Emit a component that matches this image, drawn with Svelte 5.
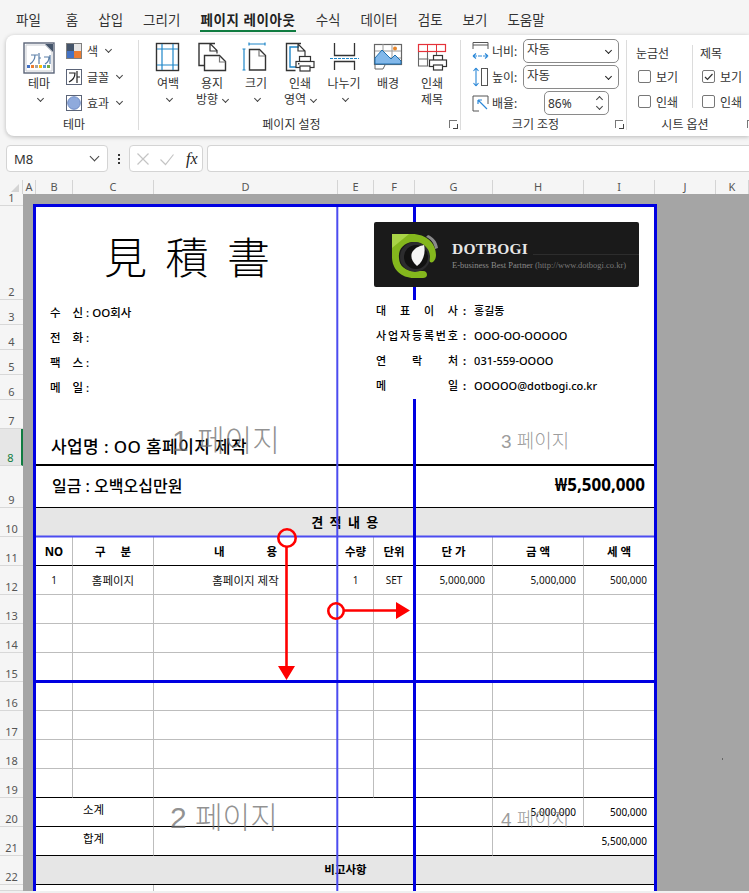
<script>
	const tabs = ['파일', '홈', '삽입', '그리기', '페이지 레이아웃', '수식', '데이터', '검토', '보기', '도움말'];
	const colHeads = ['A', 'B', 'C', 'D', 'E', 'F', 'G', 'H', 'I', 'J', 'K'];

	// left block + right block of the quote header
	const customer = ['수    신 : OO회사', '전    화 :', '팩    스 :', '메    일 :'];
	const company = [
		['대표이사', '홍길동'],
		['사업자등록번호', 'OOO-OO-OOOOO'],
		['연락처', '031-559-OOOO'],
		['메일', 'OOOOO@dotbogi.co.kr']
	];
	const heads = ['NO', '구     분', '내              용', '수량', '단위', '단 가', '금 액', '세 액'];
	const first = ['1', '홈페이지', '홈페이지 제작', '1', 'SET', '5,000,000', '5,000,000', '500,000'];
	const emptyRows = [13, 14, 15, 16, 17, 18, 19];
</script>

<div class="app">
	<nav class="tabs">
		{#each tabs as t, i}
			<span class="tab" class:active={i === 4}>{t}</span>
		{/each}
	</nav>

	<section class="ribbon">
		<div class="group theme">
			<div class="body">
				<div class="big theme-btn">
					<svg width="32" height="32" viewBox="0 0 32 32">
						<rect x="1" y="1" width="30" height="30" fill="#fff" stroke="#5b6478" stroke-width="1.4" />
						<path d="M3 3h19l7 7v19H3z" fill="#fff" stroke="#c9ccd2" />
						<path d="M22 2h8v8z" fill="#44546a" />
						<path d="M8 13h7M12 13c0 5-2 7-5 9M16 11v11M16 16h2M21 15h5c0 4-2 6-4 7M27 13v9" fill="none" stroke="#5a7fa8" stroke-width="1.2" />
						<rect x="4" y="23" width="3" height="3" fill="#4472c4" />
						<rect x="8" y="23" width="3" height="3" fill="#ed7d31" />
						<rect x="12" y="23" width="3" height="3" fill="#a5a5a5" />
						<rect x="16" y="23" width="3" height="3" fill="#ffc000" />
						<rect x="20" y="23" width="3" height="3" fill="#5b9bd5" />
						<rect x="24" y="23" width="3" height="3" fill="#70ad47" />
					</svg>
					<span class="lbl">테마</span>
					<i class="chev"></i>
				</div>
				<div class="small-col">
					<div class="small">
						<svg width="16" height="16" viewBox="0 0 16 16">
							<rect width="16" height="16" fill="#7f7f7f" />
							<rect x="1" y="1" width="7" height="7" fill="#44546a" />
							<rect x="8" y="1" width="7" height="7" fill="#e7e6e6" />
							<rect x="1" y="8" width="7" height="7" fill="#4472c4" />
							<rect x="8" y="8" width="7" height="7" fill="#ed7d31" />
						</svg>
						<span>색</span><i class="chev"></i>
					</div>
					<div class="small">
						<svg width="16" height="16" viewBox="0 0 16 16">
							<rect x=".5" y=".5" width="15" height="15" fill="#fff" stroke="#5b6478" />
							<path d="M3 4h6c0 4-2 7-6 9M11 2v12M11 8h3" fill="none" stroke="#222" stroke-width="1.2" />
						</svg>
						<span>글꼴</span><i class="chev"></i>
					</div>
					<div class="small">
						<svg width="16" height="16" viewBox="0 0 16 16">
							<rect x=".5" y=".5" width="15" height="15" fill="#fff" stroke="#5b6478" />
							<circle cx="8" cy="8" r="6.3" fill="#8faadc" stroke="#6f8bc4" />
						</svg>
						<span>효과</span><i class="chev"></i>
					</div>
				</div>
			</div>
			<div class="group-name">테마</div>
		</div>

		<div class="group setup">
			<div class="body">
				<div class="big">
					<svg width="32" height="30" viewBox="0 0 32 30">
						<rect x="4.5" y="1.5" width="22" height="27" fill="#fff" stroke="#333" stroke-width="1.4" />
						<path d="M10 2v26M21 2v26M5 7h21M5 23h21" stroke="#1f86c8" stroke-width="1.2" fill="none" />
					</svg>
					<span class="lbl">여백</span>
					<i class="chev"></i>
				</div>
				<div class="big">
					<svg width="32" height="30" viewBox="0 0 32 30">
						<path d="M19 1.5H3v22h5" fill="none" stroke="#333" stroke-width="1.4" />
						<path d="M14 1.5l7 7v3M14 2v7h7" fill="none" stroke="#333" stroke-width="1.2" />
						<path d="M8.5 13.5h15l6 6v9h-21z" fill="#fff" stroke="#333" stroke-width="1.4" />
						<path d="M23.5 14v6h6" fill="none" stroke="#777" stroke-width="1.2" />
					</svg>
					<span class="lbl">용지</span>
					<span class="lbl">방향 <i class="chev"></i></span>
				</div>
				<div class="big">
					<svg width="32" height="30" viewBox="0 0 32 30">
						<path d="M9 2h16M9 .5v3M25 .5v3M4 7v21M2.500 7h3M2.500 28h3" fill="none" stroke="#1f86c8" stroke-width="1.2" />
						<path d="M9.500 7.500h10l6 6v14.500h-16z" fill="#fff" stroke="#333" stroke-width="1.4" />
						<path d="M19 8v6h6" fill="none" stroke="#777" stroke-width="1.2" />
					</svg>
					<span class="lbl">크기</span>
					<i class="chev"></i>
				</div>
				<div class="big">
					<svg width="32" height="30" viewBox="0 0 32 30">
						<path d="M17 1.500H2.500v27h9" fill="none" stroke="#333" stroke-width="1.4" />
						<path d="M15 5H6v20h6" fill="none" stroke="#1f86c8" stroke-width="1.4" />
						<path d="M14 2l7 7v5M14 2v7h7" fill="none" stroke="#333" stroke-width="1.2" />
						<rect x="15.500" y="14.500" width="11" height="5" fill="#fff" stroke="#333" stroke-width="1.2" />
						<rect x="12" y="19.500" width="18" height="6" fill="#fff" stroke="#333" stroke-width="1.2" />
						<rect x="16" y="24" width="10" height="5" fill="#fff" stroke="#333" stroke-width="1.2" />
						<rect x="14" y="21" width="1.500" height="1.500" fill="#333" />
					</svg>
					<span class="lbl">인쇄</span>
					<span class="lbl">영역 <i class="chev"></i></span>
				</div>
				<div class="big">
					<svg width="32" height="30" viewBox="0 0 32 30">
						<path d="M6.500 1v12.500h20V1M6.500 28V19.500h20V28" fill="none" stroke="#333" stroke-width="1.3" />
						<path d="M2 16.500h29" stroke="#1f86c8" stroke-width="1.2" stroke-dasharray="3 1" />
					</svg>
					<span class="lbl">나누기</span>
					<i class="chev"></i>
				</div>
				<div class="big">
					<svg width="32" height="30" viewBox="0 0 32 30">
						<rect x="2.500" y="2.500" width="27" height="20" fill="#fff" stroke="#666" stroke-width="1.200" />
						<path d="M11 2v15M20 2v15M3 9h26M3 16h26" stroke="#999" fill="none" />
						<path d="M3 22v-6l7-8 9 9 4-4 6 6v3z" fill="#82b8ea" stroke="#1f6fae" stroke-width="1" />
						<circle cx="23" cy="6.500" r="2" fill="#e8862a" />
						<path d="M3 23v4h8l2-4" fill="#fff" stroke="#666" />
					</svg>
					<span class="lbl">배경</span>
				</div>
				<div class="big">
					<svg width="32" height="30" viewBox="0 0 32 30">
						<rect x="2.500" y="2.500" width="27" height="7" fill="#fff" stroke="#e5323a" stroke-width="1.200" />
						<path d="M11.500 3v6M20.500 3v6" stroke="#e5323a" fill="none" />
						<path d="M2.500 10v14h10M2.500 17h10M11.500 10v14M20.500 10v3" fill="none" stroke="#666" stroke-width="1.100" />
						<rect x="17.500" y="13.500" width="9" height="5" fill="#fff" stroke="#333" stroke-width="1.200" />
						<rect x="13.500" y="18" width="17" height="6.500" fill="#fff" stroke="#333" stroke-width="1.200" />
						<rect x="17.500" y="23" width="9" height="5" fill="#fff" stroke="#333" stroke-width="1.200" />
					</svg>
					<span class="lbl">인쇄</span>
					<span class="lbl">제목</span>
				</div>
			</div>
			<div class="group-name">페이지 설정</div>
			<span class="launcher"></span>
		</div>

		<div class="group scale">
			<div class="scale-rows">
				<div class="scale-row">
					<svg width="17" height="20" viewBox="0 0 17 20">
						<path d="M1 8V1.500h15V8M1 4h15" fill="none" stroke="#555" />
						<path d="M1 15h15M1 15l3-2.500M1 15l3 2.500M16 15l-3-2.500M16 15l-3 2.500" fill="none" stroke="#2b88d8" stroke-width="1.100" stroke-dasharray="4 1" />
					</svg>
					<span class="scale-lbl">너비:</span>
					<div class="select">자동<i class="chev"></i></div>
				</div>
				<div class="scale-row">
					<svg width="17" height="22" viewBox="0 0 17 22">
						<path d="M4 2v18M4 2L1.500 5M4 2l2.500 3M4 20l-2.500-3M4 20l2.500-3" fill="none" stroke="#2b88d8" stroke-width="1.100" />
						<rect x="9.500" y="2.500" width="6" height="17" fill="none" stroke="#555" />
					</svg>
					<span class="scale-lbl">높이:</span>
					<div class="select">자동<i class="chev"></i></div>
				</div>
				<div class="scale-row">
					<svg width="17" height="17" viewBox="0 0 17 17">
						<path d="M7 16H1V1h15v8" fill="none" stroke="#555" />
						<path d="M6 5l9 9M6 5v4M6 5h4" fill="none" stroke="#2b88d8" stroke-width="1.200" />
					</svg>
					<span class="scale-lbl">배율:</span>
					<div class="spin">
						<span>86%</span>
						<span class="arrows"><i class="chev up"></i><i class="chev"></i></span>
					</div>
				</div>
			</div>
			<div class="group-name">크기 조정</div>
			<span class="launcher"></span>
		</div>

		<div class="group options">
			<div class="opt-cols">
				<div class="opt-col">
					<div class="opt-title">눈금선</div>
					<label class="opt"><span class="box"></span>보기</label>
					<label class="opt"><span class="box"></span>인쇄</label>
				</div>
				<div class="opt-col second">
					<div class="opt-title">제목</div>
					<label class="opt">
						<span class="box">
							<svg width="11" height="11" viewBox="0 0 11 11"><path d="M2 6l2.500 2.500L9.500 3" fill="none" stroke="#333" stroke-width="1.200" /></svg>
						</span>보기
					</label>
					<label class="opt"><span class="box"></span>인쇄</label>
				</div>
			</div>
			<div class="group-name">시트 옵션</div>
			<span class="launcher cut"></span>
		</div>
	</section>

	<section class="formula">
		<div class="name-box">M8<i class="chev big-chev"></i></div>
		<div class="dots"><b></b><b></b><b></b></div>
		<div class="fx-box">
			<svg width="14" height="14" viewBox="0 0 14 14"><path d="M1.500 1.500l11 11M12.500 1.500l-11 11" stroke="#c4c4c4" stroke-width="1.200" /></svg>
			<svg width="16" height="14" viewBox="0 0 16 14"><path d="M1.500 7.500l5 5 8-10" fill="none" stroke="#c4c4c4" stroke-width="1.200" /></svg>
			<span class="fx">fx</span>
		</div>
		<div class="input"></div>
	</section>

	<section class="sheet">
		<div class="corner"></div>
		{#each colHeads as c}
			<div class="col-head">{c}</div>
		{/each}

		<!-- row 1 -->
		<div class="row-head"><span>1</span></div>
		<div class="gutter"></div>
		<div class="cell plain top" style="grid-column: span 8"></div>

		<!-- row 2 -->
		<div class="row-head"><span>2</span></div>
		<div class="gutter"></div>
		<div class="cell plain title-cell" style="grid-column: span 3"><h1>見 積 書</h1></div>
		<div class="cell plain logo-cell" style="grid-column: span 5">
			<div class="logo">
				<svg class="mark" width="50" height="46" viewBox="0 0 50 46">
					<path d="M37 2c5 2 9 6 10 13l-3 1c-1-6-4-10-9-12z" fill="#8a8a8a" />
					<path d="M1 1h20c14 0 24 9 24 21 0 3-1 5-3 7-2 1-4 0-4-3 1-10-7-18-17-17C13 10 7 16 8 25c0 8 7 13 15 13h9c3 0 4 2 4 4s-2 3-4 3h-9C10 45 1 36 1 24z" fill="#84b71d" />
					<path d="M1 1h17L1 15z" fill="#a9d447" />
					<circle cx="24" cy="24" r="15" fill="#2c2c2e" />
					<circle cx="25" cy="24" r="12" fill="#111" />
					<path d="M33 12c2 8-1 17-7 21-6-5-7-11-4-15 3-4 7-5 11-6z" fill="#f4f4f4" />
				</svg>
				<div class="logo-text">
					<div class="brand">DOTBOGI<span class="brand-line"></span></div>
					<div class="slogan">E-business Best Partner <span>(http://www.dotbogi.co.kr)</span></div>
				</div>
			</div>
		</div>

		<!-- rows 3-6 -->
		{#each customer as text, i}
			<div class="row-head"><span>{i + 3}</span></div>
			<div class="gutter"></div>
			<div class="cell plain info left" style="grid-column: span 3">{text}</div>
			<div class="cell plain info contact" style="grid-column: span 5">
				<span class="key">
					{#each company[i][0] as ch}<span>{ch}</span>{/each}
				</span>
				<span class="colon">:</span>
				<span>{company[i][1]}</span>
			</div>
		{/each}

		<!-- row 7 -->
		<div class="row-head"><span>7</span></div>
		<div class="gutter"></div>
		<div class="cell plain" style="grid-column: span 8"></div>

		<!-- row 8 -->
		<div class="row-head selected"><span>8</span></div>
		<div class="gutter"></div>
		<div class="cell project" style="grid-column: span 8">사업명 : OO 홈페이지 제작</div>

		<!-- row 9 -->
		<div class="row-head"><span>9</span></div>
		<div class="gutter"></div>
		<div class="cell amount" style="grid-column: span 8">
			<span>일금 : 오백오십만원</span>
			<strong>₩5,500,000</strong>
		</div>

		<!-- row 10 -->
		<div class="row-head"><span>10</span></div>
		<div class="gutter"></div>
		<div class="cell band" style="grid-column: span 8">견 적 내 용</div>

		<!-- row 11 -->
		<div class="row-head"><span>11</span></div>
		<div class="gutter"></div>
		{#each heads as h}
			<div class="cell head">{h}</div>
		{/each}

		<!-- row 12 -->
		<div class="row-head"><span>12</span></div>
		<div class="gutter"></div>
		{#each first as v, i}
			<div class="cell data" class:num={i > 4} class:hangul={i === 1 || i === 2}>{v}</div>
		{/each}

		<!-- rows 13-19 -->
		{#each emptyRows as n}
			<div class="row-head"><span>{n}</span></div>
			<div class="gutter"></div>
			{#each first as _}
				<div class="cell data" class:last={n === 19}></div>
			{/each}
		{/each}

		<!-- row 20 -->
		<div class="row-head"><span>20</span></div>
		<div class="gutter"></div>
		<div class="cell total label" style="grid-column: span 2">소계</div>
		<div class="cell total" style="grid-column: span 4"></div>
		<div class="cell total num">5,000,000</div>
		<div class="cell total num">500,000</div>

		<!-- row 21 -->
		<div class="row-head"><span>21</span></div>
		<div class="gutter"></div>
		<div class="cell total label" style="grid-column: span 2">합계</div>
		<div class="cell total" style="grid-column: span 4"></div>
		<div class="cell total num" style="grid-column: span 2">5,500,000</div>

		<!-- row 22 -->
		<div class="row-head"><span>22</span></div>
		<div class="gutter"></div>
		<div class="cell band small-band" style="grid-column: span 8">비고사항</div>

		<!-- row 23, cut off by the window -->
		<div class="row-head"></div>
		<div class="gutter"></div>
		<div class="cell plain tail" style="grid-column: span 2"></div>
		<div class="cell plain" style="grid-column: span 6"></div>

		<!-- page breaks and annotation arrows sit over the cells -->
		<svg class="overlay" viewBox="0 180 749 711" width="749" height="711">
			<g fill="none">
				<path d="M337.300 207V891M36 536.500H654" stroke="#4c4cf0" stroke-width="2" />
				<path d="M34.500 891V205.500H655.500V891" stroke="#0000e1" stroke-width="3" />
				<path d="M36 681.500H654M414.500 207V222M414.500 287V300M414.500 399V891" stroke="#0000e1" stroke-width="3" />
				<circle cx="287" cy="538" r="8.700" stroke="#f00" stroke-width="2.600" />
				<circle cx="336" cy="611" r="7.700" stroke="#f00" stroke-width="2.600" />
				<path d="M286.500 547V667M344 610.500H397" stroke="#f00" stroke-width="2.600" />
			</g>
			<path d="M278 666H295L286.500 680zM396 602L410 610.500L396 619z" fill="#f00" />
			<rect x="722" y="758" width="1" height="2" fill="#666" />
		</svg>

		<span class="wm large p1">1 페이지</span>
		<span class="wm large p2">2 페이지</span>
		<span class="wm small-wm p3">3 페이지</span>
		<span class="wm small-wm p4">4 페이지</span>
	</section>

	<div class="foot"></div>
</div>

<style>
	:global(body) {
		margin: 0;
		background: #f5f5f5;
	}

	.app {
		width: 749px;
		height: 893px;
		overflow: hidden;
		display: flex;
		flex-direction: column;
		background: #f5f5f5;
		color: #333;
		font-family: "Noto Sans", "Noto Sans CJK KR", sans-serif;
	}

	.tabs {
		height: 35px;
		flex: none;
		display: flex;
		gap: 20px;
		padding-left: 16px;
		box-sizing: border-box;
		font-size: 13.500px;
		align-items: flex-start;
		padding-top: 11px;
		line-height: 18px;
	}
	.tab:first-child { margin-right: 5px; }
	.tab.active {
		font-weight: 700;
		letter-spacing: .6px;
		height: 19px;
		border-bottom: 2px solid #107c41;
		color: #222;
	}

	.ribbon {
		height: 101px;
		flex: none;
		margin-left: 6px;
		background: #fff;
		border-radius: 8px 0 0 8px;
		box-shadow: 0 1px 4px rgba(0,0,0,.25);
		display: flex;
		font-size: 12px;
	}

	.group {
		position: relative;
		display: flex;
		flex-direction: column;
		flex: none;
		box-sizing: border-box;
		border-right: 1px solid #dcdcdc;
		margin: 5px 0;
		height: 90px;
	}
	.theme { width: 133px; }
	.setup { width: 322px; }
	.scale { width: 166px; }
	.options { width: 122px; border-right: 0; }

	.body {
		display: flex;
		flex: none;
		height: 76px;
	}
	.theme .body { padding-left: 10px; }
	.setup .body { padding-left: 7px; }

	.big {
		width: 44px;
		display: flex;
		flex-direction: column;
		align-items: center;
		padding-top: 2px;
		box-sizing: border-box;
		line-height: 16px;
	}
	.big svg { margin-bottom: 4px; flex: none; height: 30px; }
	.lbl { height: 16px; white-space: nowrap; font-size: 12px; }
	.big > .chev { margin-top: 6px; }

	.theme-btn { width: 46px; }
	.theme-btn svg { height: 32px; margin-bottom: 2px; }

	.chev {
		display: inline-block;
		width: 4px;
		height: 4px;
		border-right: 1.2px solid #444;
		border-bottom: 1.2px solid #444;
		transform: rotate(45deg);
		margin-left: 2px;
		position: relative;
		top: -2px;
	}

	.small-col {
		display: flex;
		flex-direction: column;
		gap: 10px;
		margin-left: 4px;
		padding-top: 3px;
	}
	.small {
		display: flex;
		align-items: center;
		gap: 5px;
		height: 16px;
	}
	.small .chev { margin-left: 3px; }

	.group-name {
		text-align: center;
		font-size: 12px;
		line-height: 16px;
		padding-top: 1px;
	}
	.theme .group-name { padding-left: 4px; }
	.setup .group-name { padding-right: 16px; }
	.scale .group-name { padding-right: 16px; }
	.options .group-name { padding-right: 6px; }

	.launcher {
		position: absolute;
		right: 3px;
		bottom: 2px;
		width: 7px;
		height: 7px;
		border-left: 1px solid #777;
		border-top: 1px solid #777;
	}
	.launcher.cut { right: -6px; }
	.launcher::after {
		content: "";
		position: absolute;
		right: -1px;
		bottom: -1px;
		width: 4px;
		height: 4px;
		border-right: 1px solid #444;
		border-bottom: 1px solid #444;
	}

	.scale-rows {
		flex: none;
		height: 76px;
		padding: 0 0 0 11px;
		display: flex;
		flex-direction: column;
		gap: 2px;
		margin-top: -1px;
		margin-bottom: 1px;
		box-sizing: border-box;
	}
	.scale-row {
		display: flex;
		align-items: center;
		height: 24px;
		gap: 3px;
	}
	.scale-row svg { flex: none; width: 17px; }
	.scale-lbl { width: 26px; flex: none; }
	.select {
		margin-left: 2px;
		width: 96px;
		height: 24px;
		box-sizing: border-box;
		border: 1px solid #8a8a8a;
		border-radius: 5px;
		padding: 0 4px 2px 3px;
		display: flex;
		align-items: center;
		justify-content: space-between;
		font-size: 12.500px;
		line-height: 18px;
	}
	.select .chev { border-color: #222; margin-right: 3px; top: 0; }
	.spin {
		margin-left: 23px;
		width: 65px;
		height: 24px;
		box-sizing: border-box;
		border: 1px solid #8a8a8a;
		border-radius: 5px;
		padding: 0 6px 0 3px;
		display: flex;
		align-items: center;
		justify-content: space-between;
	}
	.arrows {
		display: flex;
		flex-direction: column;
		gap: 5px;
		align-items: center;
	}
	.chev.up { transform: rotate(225deg); top: 1px; }
	.arrows .chev { margin: 0; }

	.opt-cols {
		display: flex;
		flex: none;
		height: 76px;
		padding-top: 5px;
		box-sizing: border-box;
	}
	.opt-col {
		width: 66px;
		padding-left: 9px;
		box-sizing: border-box;
		border-right: 1px solid #dcdcdc;
		height: 63px;
		flex: none;
	}
	.opt-col.second { border-right: 0; padding-left: 7px; }
	.opt-title { height: 19px; line-height: 18px; }
	.opt {
		display: flex;
		align-items: center;
		gap: 5px;
		height: 25px;
		margin-left: 2px;
	}
	.box {
		width: 13px;
		height: 13px;
		box-sizing: border-box;
		border: 1px solid #777;
		border-radius: 2px;
		display: flex;
		align-items: center;
		justify-content: center;
		flex: none;
	}

	.formula {
		height: 44px;
		flex: none;
		display: flex;
		align-items: flex-start;
		padding-top: 9px;
		padding-left: 6px;
		box-sizing: border-box;
	}
	.name-box, .fx-box, .input {
		height: 27px;
		box-sizing: border-box;
		background: #fff;
		border: 1px solid #d4d4d4;
		border-radius: 4px;
		display: flex;
		align-items: center;
	}
	.name-box {
		width: 102px;
		padding: 0 7px;
		justify-content: space-between;
		font-size: 13px;
	}
	.big-chev { width: 6px; height: 6px; top: -2px; margin-right: 2px; }
	.dots {
		width: 21px;
		height: 27px;
		display: flex;
		flex-direction: column;
		align-items: center;
		justify-content: center;
		gap: 2px;
	}
	.dots b { width: 2px; height: 2px; background: #333; }
	.fx-box {
		width: 74px;
		gap: 9px;
		padding-left: 6px;
	}
	.fx {
		font-family: "Liberation Serif", serif;
		font-style: italic;
		font-size: 16px;
		margin-left: 2px;
		color: #222;
	}
	.input {
		flex: 1;
		margin-left: 4px;
		border-right: 0;
		border-radius: 4px 0 0 4px;
	}

	.sheet {
		position: relative;
		flex: none;
		height: 711px;
		background: #a5a5a5;
		display: grid;
		grid-template-columns: 23px 13px 37px 81px 184px 36px 41px 78px 91px 71px 61px 33px;
		grid-template-rows: 14px 12px 94px 25px 25px 25px 25px 29px 37px 42px 29px 29px 29px 29px 29px 29px 29px 29px 29px 29px 29px 29px 29px 6px;
		overflow: hidden;
	}

	.corner, .col-head {
		background: #f5f5f5;
	}
	.corner {
		position: relative;
		border-right: 1px solid #d4d4d4;
		box-sizing: border-box;
	}
	.corner::after {
		content: "";
		position: absolute;
		right: 3px;
		bottom: 2px;
		border-style: solid;
		border-width: 0 0 8px 8px;
		border-color: transparent transparent #d4d4d4 transparent;
	}
	.col-head {
		font-size: 11px;
		line-height: 13px;
		text-align: center;
		color: #555;
		border-right: 1px solid #d4d4d4;
		box-sizing: border-box;
	}

	.row-head {
		grid-column: 1;
		background: #f5f5f5;
		border-bottom: 1px solid #d8d8d8;
		box-sizing: border-box;
		display: flex;
		align-items: flex-end;
		justify-content: center;
		font-size: 11px;
		line-height: 14px;
		color: #555;
		overflow: hidden;
	}
	.row-head.selected {
		background: #e6e6e6;
		border-right: 2px solid #107c41;
		color: #107c41;
	}

	.cell {
		background: #fff;
		min-width: 0;
		box-sizing: border-box;
		color: #111;
		white-space: nowrap;
		display: flex;
		align-items: center;
	}
	.top { background: linear-gradient(#a5a5a5 10px, #fff 10px); }

	.title-cell {
		justify-content: center;
		align-items: flex-end;
	}
	h1 {
		margin: 0 0 17px;
		font-family: "Noto Sans CJK JP", "Noto Sans CJK KR", serif;
		font-weight: 300;
		font-size: 43px;
		line-height: 56px;
		color: #000;
		word-spacing: 9px;
	}

	.logo-cell {
		align-items: flex-start;
		padding: 16px 0 0 36px;
	}
	.logo {
		width: 265px;
		height: 65px;
		background: #1a1a1a;
		border-radius: 2px;
		flex: none;
		display: flex;
	}
	.mark { margin: 11px 0 0 17px; flex: none; }
	.logo-text { margin-left: 11px; width: 187px; padding-top: 18px; }
	.brand {
		font-family: "Liberation Serif", serif;
		font-size: 15.500px;
		font-variant: small-caps;
		font-weight: 700;
		line-height: 18px;
		color: #e6e6e6;
		display: flex;
		align-items: flex-end;
		letter-spacing: .3px;
	}
	.brand-line {
		flex: 1;
		height: 1px;
		background: #2d2d2d;
		margin: 0 0 3px 5px;
	}
	.slogan {
		font-family: "Liberation Serif", serif;
		font-size: 8.500px;
		line-height: 12px;
		color: #8c8c8c;
		margin-top: 1px;
	}
	.slogan span { color: #777; }

	.info {
		font-size: 11px;
		font-weight: 500;
		color: #000;
	}
	.left {
		padding: 0 0 2px 14px;
		white-space: pre;
		font-size: 11.500px;
	}
	.contact {
		padding: 0 0 5px 38px;
	}
	.key {
		width: 82px;
		display: flex;
		justify-content: space-between;
		flex: none;
	}
	.colon { margin: 0 8px 0 5px; font-weight: 700; }

	.project {
		font-size: 17px;
		font-weight: 500;
		letter-spacing: .4px;
		color: #000;
		padding: 0 0 6px 15px;
		align-items: flex-end;
		border-bottom: 2px solid #000;
	}
	.amount {
		font-size: 16px;
		font-weight: 500;
		color: #000;
		padding: 0 10px 4px 16px;
		justify-content: space-between;
		border-bottom: 1px solid #000;
	}
	.amount strong { font-size: 17px; font-weight: 700; }

	.band {
		background: #e6e6e6;
		justify-content: center;
		font-size: 13px;
		font-weight: 700;
		letter-spacing: 1.500px;
		color: #000;
		padding-bottom: 2px;
	}
	.small-band {
		font-size: 11.500px;
		letter-spacing: 0;
		border-bottom: 1px solid #000;
	}

	.head {
		justify-content: center;
		font-size: 11.500px;
		font-weight: 700;
		color: #000;
		white-space: pre;
		border-right: 1px solid #bdbdbd;
		border-bottom: 1px solid #000;
	}
	.data {
		justify-content: center;
		font-size: 10px;
		color: #111;
		border-right: 1px solid #bdbdbd;
		border-bottom: 1px solid #bdbdbd;
	}
	.data.hangul { font-size: 11.500px; }
	.data.last { border-bottom-color: #000; }
	.num {
		justify-content: flex-end;
		padding-right: 7px;
	}

	.total {
		font-size: 10px;
		color: #000;
		border-right: 1px solid #bdbdbd;
		border-bottom: 1px solid #000;
	}
	.label {
		font-size: 11.500px;
		padding: 3px 0 0 47px;
		align-items: flex-start;
	}
	.tail { border-right: 1px solid #bdbdbd; }

	.overlay {
		position: absolute;
		left: 0;
		top: 0;
		pointer-events: none;
		z-index: 3;
	}

	.wm {
		position: absolute;
		z-index: 4;
		color: rgba(110,110,110,.75);
		white-space: nowrap;
		font-family: "Liberation Sans", "Noto Sans CJK KR", sans-serif;
		line-height: 1;
		font-weight: 300;
	}
	.large { font-size: 30px; }
	.small-wm { font-size: 19px; color: rgba(130,130,130,.8); }
	.p1 { left: 172px; top: 246px; }
	.p2 { left: 170px; top: 623px; }
	.p3 { left: 501px; top: 252px; }
	.p4 { left: 501px; top: 630px; }

	.foot {
		flex: none;
		height: 2px;
		background: #f0f0f0;
	}
</style>
